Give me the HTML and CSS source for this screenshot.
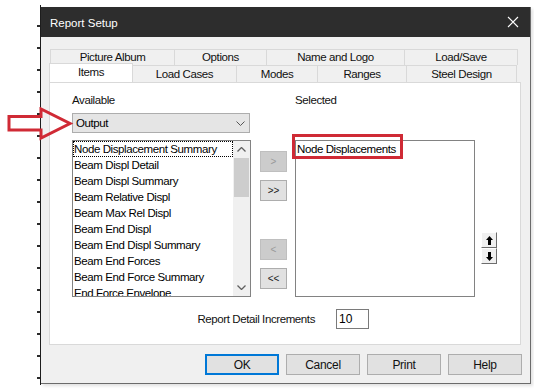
FILE: index.html
```html
<!DOCTYPE html>
<html lang="en">
<head>
<meta charset="UTF-8">
<meta name="viewport" content="width=device-width, initial-scale=1.0">
<title>Report Setup</title>
<link rel="stylesheet" href="styles.css">
</head>
<body>
<div class="desktop">
  <div class="ruler"><div class="ticks"></div></div>

  <div class="dialog">
    <header class="titlebar">
      <span class="title">Report Setup</span>
      <svg class="close" width="12" height="12" viewBox="0 0 12 12"><path d="M1 1L11 11M11 1L1 11" stroke="#fff" stroke-width="1.1"/></svg>
    </header>

    <div class="dialog-body">
      <div class="tabs">
        <div class="tab-row back">
          <div class="tab" style="width:125px">Picture Album</div>
          <div class="tab" style="width:93px">Options</div>
          <div class="tab" style="width:139px">Name and Logo</div>
          <div class="tab" style="width:114px">Load/Save</div>
        </div>
        <div class="tab-row front">
          <div class="tab active" style="width:84px">Items</div>
          <div class="tab" style="width:105px">Load Cases</div>
          <div class="tab" style="width:82px">Modes</div>
          <div class="tab" style="width:90px">Ranges</div>
          <div class="tab" style="width:111px">Steel Design</div>
        </div>
      </div>

      <section class="panel">
        <div class="picker">
          <label class="caption">Available</label>
          <label class="caption selected-caption">Selected</label>

          <div class="dropdown">
            <span>Output</span>
            <svg width="9" height="5" viewBox="0 0 9 5"><path d="M0.5 0.5L4.5 4.5L8.5 0.5" fill="none" stroke="#555" stroke-width="1"/></svg>
          </div>

          <div class="listbox available">
            <ul class="items">
              <li class="focused">Node Displacement Summary</li>
              <li>Beam Displ Detail</li>
              <li>Beam Displ Summary</li>
              <li>Beam Relative Displ</li>
              <li>Beam Max Rel Displ</li>
              <li>Beam End Displ</li>
              <li>Beam End Displ Summary</li>
              <li>Beam End Forces</li>
              <li>Beam End Force Summary</li>
              <li>End Force Envelope</li>
            </ul>
            <div class="scrollbar">
              <div class="sb-arrow"><svg width="9" height="5" viewBox="0 0 9 5"><path d="M0.5 4.5L4.5 0.5L8.5 4.5" fill="none" stroke="#606060" stroke-width="1.3"/></svg></div>
              <div class="sb-thumb"></div>
              <div class="sb-track"></div>
              <div class="sb-arrow"><svg width="9" height="5" viewBox="0 0 9 5"><path d="M0.5 0.5L4.5 4.5L8.5 0.5" fill="none" stroke="#606060" stroke-width="1.3"/></svg></div>
            </div>
          </div>

          <div class="movers">
            <button class="mover" disabled>&gt;</button>
            <button class="mover">&gt;&gt;</button>
            <button class="mover gap" disabled>&lt;</button>
            <button class="mover">&lt;&lt;</button>
          </div>

          <div class="listbox selected">
            <ul class="items">
              <li>Node Displacements</li>
            </ul>
            <div class="mark"></div>
          </div>

          <div class="order">
            <button class="order-btn"><svg width="7" height="9" viewBox="0 0 7 9"><path d="M3.5 0L7 4H5V9H2V4H0Z" fill="#000"/></svg></button>
            <button class="order-btn"><svg width="7" height="9" viewBox="0 0 7 9"><path d="M3.5 9L7 5H5V0H2V5H0Z" fill="#000"/></svg></button>
          </div>
        </div>

        <div class="increments">
          <label class="inc-label" for="inc">Report Detail Increments</label>
          <input type="text" id="inc" class="inc-input" value="10">
        </div>
      </section>

      <footer class="actions">
        <button class="btn default">OK</button>
        <button class="btn">Cancel</button>
        <button class="btn">Print</button>
        <button class="btn">Help</button>
      </footer>
    </div>
  </div>
</div>

<svg class="pointer" width="68" height="36" viewBox="0 0 68 36">
  <path d="M2 9.5H34V2L63 16.5L34 31V23H2Z" fill="none" stroke="#d02a35" stroke-width="3" stroke-linejoin="miter"/>
</svg>
</body>
</html>
```

FILE: styles.css
```css
body {
  margin: 0;
  width: 534px;
  height: 390px;
  overflow: hidden;
  background: #fff;
  font-family: "Liberation Sans", Arial, sans-serif;
  font-size: 11.5px;
  letter-spacing: -0.4px;
  color: #000;
  position: relative;
}
.desktop {
  display: flex;
  padding-top: 7px;
}
.ruler {
  width: 40px;
  height: 380px;
  margin-top: -2px;
  border-right: 1px solid #1e1e1e;
  display: flex;
  justify-content: flex-end;
}
.ticks {
  width: 3px;
  height: 100%;
  background: repeating-linear-gradient(to bottom, transparent 0 20px, #2a2a2a 20px 22px);
}
.dialog {
  width: 489px;
  height: 376px;
  border-right: 1px solid #6b6b6b;
  border-bottom: 1px solid #6b6b6b;
  background: #f0f0f0;
  display: flex;
  flex-direction: column;
  box-shadow: 2px 2px 3px rgba(0, 0, 0, 0.12);
}
.titlebar {
  height: 30px;
  background: #2d2d2d;
  color: #fff;
  display: flex;
  align-items: center;
  justify-content: space-between;
  padding: 0 11px 0 9px;
  flex-shrink: 0;
}
.title {
  font-size: 11.5px;
  letter-spacing: 0;
  padding-top: 1px;
}
.dialog-body {
  padding: 12px 9px 0 8px;
}

/* tabs */
.tabs {
  width: 472px;
}
.tab-row {
  display: flex;
  height: 16px;
}
.tab-row.back {
  margin-left: 1px;
}
.tab-row.front {
  height: 17px;
}
.tab {
  box-sizing: border-box;
  border: 1px solid #d9d9d9;
  border-bottom: none;
  margin-right: -1px;
  text-align: center;
  line-height: 15px;
  color: #111;
}
.tab:last-child {
  margin-right: 0;
}
.tab-row.front .tab {
  line-height: 17px;
}
.tab.active {
  background: #fff;
  height: 19px;
  margin-top: -2px;
  position: relative;
  z-index: 1;
  line-height: 16px;
  border-color: #d9d9d9;
}

/* panel */
.panel {
  box-sizing: border-box;
  height: 263px;
  background: #fff;
  border: 1px solid #d9d9d9;
  padding: 10px 0 0 22px;
}
.picker {
  display: grid;
  grid-template-columns: 179px 44px 180px 22px;
  grid-template-rows: 20px 27px 157px;
}
.caption {
  line-height: 14px;
  color: #111;
}
.selected-caption {
  grid-column: 3;
  grid-row: 1;
}
.dropdown {
  grid-column: 1;
  grid-row: 2;
  box-sizing: border-box;
  width: 178px;
  height: 20px;
  background: #e5e5e5;
  border: 1px solid #adadad;
  display: flex;
  align-items: center;
  justify-content: space-between;
  padding: 0 4px 0 3px;
}
.listbox {
  box-sizing: border-box;
  height: 157px;
  border: 1px solid #828282;
  background: #fff;
  display: flex;
}
.listbox.available {
  grid-column: 1;
  grid-row: 3;
}
.listbox.selected {
  grid-column: 3;
  grid-row: 3;
  position: relative;
}
.items {
  list-style: none;
  margin: 0;
  padding: 0;
  flex: 1;
  overflow: hidden;
}
.items li {
  box-sizing: border-box;
  height: 16px;
  line-height: 16px;
  padding-left: 1px;
  white-space: nowrap;
}
.items li.focused {
  border: 1px dotted #000;
  line-height: 14px;
  padding-left: 0;
}
.scrollbar {
  width: 17px;
  background: #f0f0f0;
  display: flex;
  flex-direction: column;
}
.sb-arrow {
  height: 17px;
  display: flex;
  align-items: center;
  justify-content: center;
  flex-shrink: 0;
}
.sb-thumb {
  height: 39px;
  margin: 0 1px;
  background: #cdcdcd;
}
.sb-track {
  flex: 1;
}
.mark {
  position: absolute;
  left: -4px;
  top: -7px;
  width: 111px;
  height: 25px;
  box-sizing: border-box;
  border: 3px solid #cf2a35;
}

/* move buttons */
.movers {
  grid-column: 2;
  grid-row: 3;
  display: flex;
  flex-direction: column;
  padding: 11px 0 0 9px;
}
.mover {
  width: 27px;
  height: 21px;
  margin-bottom: 8px;
  padding: 0;
  font-family: inherit;
  font-size: 10px;
  background: #e1e1e1;
  border: 1px solid #adadad;
  color: #222;
}
.mover:disabled {
  background: #cccccc;
  border-color: #bfbfbf;
  color: #9a9a9a;
}
.mover.gap {
  margin-top: 30px;
}
.order {
  grid-column: 4;
  grid-row: 3;
  display: flex;
  flex-direction: column;
  padding: 92px 0 0 6px;
}
.order-btn {
  width: 16px;
  height: 16px;
  padding: 0;
  background: #f0f0f0;
  border: 1px solid;
  border-color: #fff #6d6d6d #6d6d6d #fff;
  display: flex;
  align-items: center;
  justify-content: center;
}

/* increments */
.increments {
  display: flex;
  align-items: center;
  margin-top: 12px;
}
.inc-label {
  width: 243px;
  text-align: right;
  color: #111;
}
.inc-input {
  box-sizing: border-box;
  width: 33px;
  height: 20px;
  margin-left: 21px;
  border: 1px solid #7a7a7a;
  padding: 0 2px;
  font-family: inherit;
  font-size: 12px;
}

/* footer */
.actions {
  display: flex;
  justify-content: flex-end;
  gap: 7px;
  margin: 9px -1px 0 0;
}
.btn {
  box-sizing: border-box;
  width: 74px;
  height: 21px;
  padding: 0;
  font-family: inherit;
  font-size: 12px;
  letter-spacing: -0.3px;
  background: #e1e1e1;
  border: 1px solid #adadad;
  color: #111;
}
.btn.default {
  border: 2px solid #0078d7;
}

.pointer {
  position: absolute;
  left: 7px;
  top: 107px;
}
```
